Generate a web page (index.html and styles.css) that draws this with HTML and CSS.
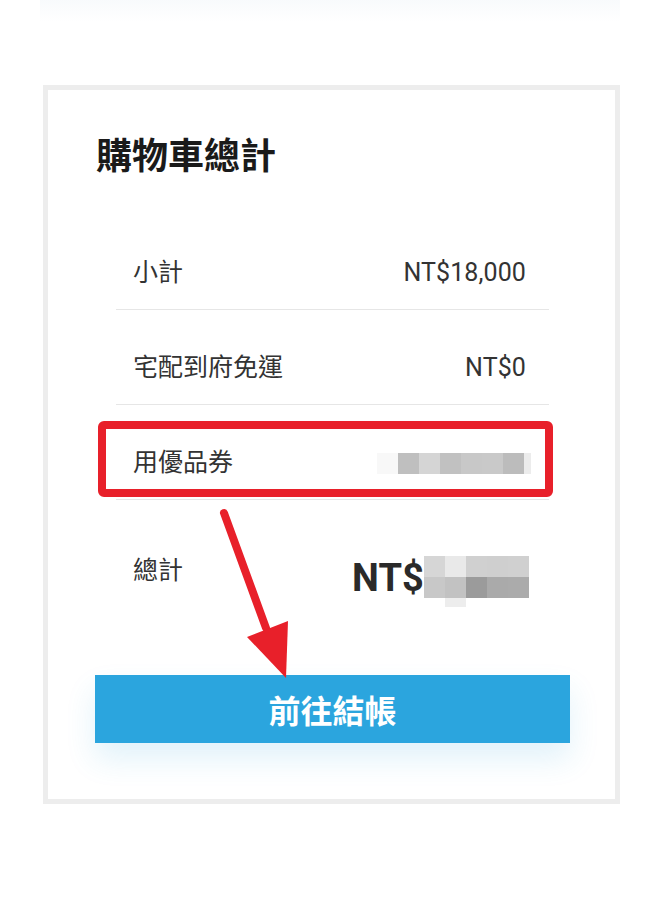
FILE: index.html
```html
<!DOCTYPE html>
<html>
<head>
<title>購物車總計</title>
<meta name="viewport" content="width=device-width, initial-scale=1.0" />
<meta charset="utf-8" />
<link rel="stylesheet" href="styles.css">
</head>
<body>
<div class="prevCard"></div>
<section class="cartTotals">
	<h2>購物車總計</h2>
	<div class="totalsTable">
		<div class="totalsRow">
			<span class="label">小計</span>
			<span class="value">NT$18,000</span>
		</div>
		<div class="totalsRow">
			<span class="label">宅配到府免運</span>
			<span class="value">NT$0</span>
		</div>
		<div class="totalsRow">
			<span class="label">用優品券</span>
			<span class="blurGrid couponBlur">
				<i class="c1"></i><i class="c2"></i><i class="c3"></i><i class="c4"></i><i class="c5"></i><i class="c6"></i><i class="c7"></i><i class="c8"></i>
			</span>
		</div>
		<div class="totalsRow orderTotal">
			<span class="label">總計</span>
			<span class="value">
				<strong>NT$</strong>
				<span class="blurGrid totalBlur">
					<i class="t1"></i><i class="t2"></i><i class="t3"></i><i class="t4"></i><i class="t5"></i>
					<i class="t6"></i><i class="t7"></i><i class="t8"></i><i class="t9"></i><i class="t10"></i>
					<i class="t11"></i>
				</span>
			</span>
		</div>
	</div>
	<a class="checkoutButton" href="#">前往結帳</a>
</section>

<!-- annotation overlay -->
<div class="highlightBox"></div>
<svg class="arrowMark" width="660" height="903" viewBox="0 0 660 903">
	<line x1="224" y1="513" x2="266" y2="628" stroke="#e8202a" stroke-width="8" stroke-linecap="round" />
	<polygon points="247,637 288,621 286,678" fill="#e8202a" />
</svg>
</body>
</html>
```

FILE: styles.css
```css
*{
	padding:0;
	margin:0;
	box-sizing:border-box;
}
body{
	position:relative;
	min-height:100vh;
	background:#fff;
	font-family:Roboto,"Noto Sans CJK TC",sans-serif;
	color:#333;
}
.prevCard{
	height:22px;
	margin:0 40px;
	background:linear-gradient(to bottom,rgba(232,240,246,0.3),rgba(255,255,255,0));
}
.cartTotals{
	width:577px;
	margin:63px 0 0 43px;
	border:5px solid #ededed;
	padding:49px 45px 56px 47px;
}
.cartTotals h2{
	font-size:36px;
	line-height:36px;
	font-weight:700;
	color:#1a1a1a;
	margin-left:1px;
}
.totalsTable{
	margin:40px 21px 0 21px;
}
.totalsRow{
	display:flex;
	justify-content:space-between;
	align-items:flex-start;
	padding:45px 23px 23px 17px;
	border-bottom:1px solid #e6e6e6;
	font-size:25px;
	line-height:26px;
}
.totalsRow .value{
	letter-spacing:0.1px;
}
.orderTotal{
	border-bottom:none;
	padding-top:58px;
	padding-bottom:0;
}
.orderTotal .value{
	display:flex;
	align-items:flex-start;
	margin-right:-3px;
}
.orderTotal strong{
	font-size:38px;
	line-height:40px;
	font-weight:700;
	color:#2a2a2a;
}
.blurGrid{
	display:grid;
}
.blurGrid i{
	display:block;
}
.couponBlur{
	grid-template-columns:21px 21px 21px 21px 21px 21px 21px 7px;
	grid-template-rows:21px;
	margin:3px -5px 0 0;
}
.couponBlur .c1{background:#f8f8f8;}
.couponBlur .c2{background:#bfbfbf;}
.couponBlur .c3{background:#d5d5d5;}
.couponBlur .c4{background:#c1c1c1;}
.couponBlur .c5{background:#c8c8c8;}
.couponBlur .c6{background:#c9c9c9;}
.couponBlur .c7{background:#bcbcbc;}
.couponBlur .c8{background:#ececec;}
.totalBlur{
	grid-template-columns:repeat(5,21px);
	grid-template-rows:21px 21px 9px;
	height:40px;
	margin-top:-2px;
}
.totalBlur .t1{background:#d6d6d6;}
.totalBlur .t2{background:#e9e9e9;}
.totalBlur .t3{background:#d0d0d0;}
.totalBlur .t4{background:#cfcfcf;}
.totalBlur .t5{background:#d0d0d0;}
.totalBlur .t6{background:#c8c8c8;}
.totalBlur .t7{background:#c2c2c2;}
.totalBlur .t8{background:#9b9b9b;}
.totalBlur .t9{background:#aaaaaa;}
.totalBlur .t10{background:#ababab;}
.totalBlur .t11{grid-column:2;grid-row:3;background:#ededed;}
.checkoutButton{
	display:flex;
	align-items:center;
	justify-content:center;
	height:68px;
	margin-top:77px;
	background:#2ba5de;
	color:#fff;
	font-size:32px;
	font-weight:700;
	text-decoration:none;
	box-shadow:0 16px 30px rgba(43,165,222,0.14);
}
.highlightBox{
	position:absolute;
	left:98px;
	top:421px;
	width:455px;
	height:76px;
	border:8px solid #e8202a;
	border-radius:6px;
}
.arrowMark{
	position:absolute;
	left:0;
	top:0;
	pointer-events:none;
}
```
